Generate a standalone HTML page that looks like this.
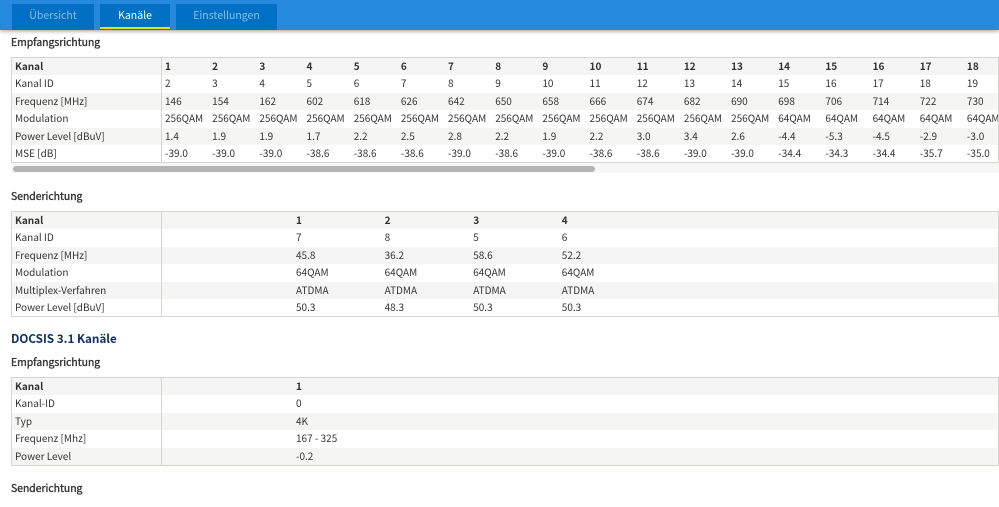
<!DOCTYPE html>
<html lang="de"><head><meta charset="utf-8"><title>Kanäle</title>
<style>
html,body{margin:0;padding:0;background:#fff}
body{width:999px;height:507px;overflow:hidden;position:relative;font-family:"Noto Sans CJK SC","Liberation Sans",sans-serif;font-size:10px;color:#333}
#w{position:absolute;left:0;top:0;width:999px;height:507px;overflow:hidden;filter:blur(.3px)}
.bar{position:absolute;left:0;top:0;width:999px;height:30px;background:#2589de;box-shadow:0 1px 4px rgba(0,0,0,.4)}
.tab{position:absolute;top:4px;height:26px;line-height:24px;background:#0070c4;color:#8dbde6;text-align:center;font-size:10.5px}
.tab.on{color:#fff}
.tab.on:after{content:"";position:absolute;left:0;right:0;bottom:1px;height:2px;background:#dfe31f}
h3,h2{position:absolute;left:11px;margin:0;font-weight:400;font-size:10.4px;line-height:16px;color:#333;white-space:nowrap;-webkit-text-stroke:.35px #333}
h2{font-size:11.7px;color:#0f2f63;font-weight:700;-webkit-text-stroke:0}
.t{position:absolute;left:11px;width:988px;box-sizing:border-box;border:1px solid #d6d6d0;overflow:hidden;background:#fff}
.r{display:flex;height:17.45px;line-height:15.45px;white-space:nowrap}
.r:nth-child(odd){background:#f5f5f4}
.r span{display:block;flex:none;overflow:visible}
.r span:first-child{width:150px;padding-left:3px;box-sizing:border-box;border-right:1px solid #d6d6d0;height:100%}
.a span:not(:first-child){width:47.18px;padding-left:3px;box-sizing:border-box}
.b span:not(:first-child){width:88.6px}
.b span:nth-child(2){margin-left:134px}
.h{font-weight:700}
.sb{position:absolute;left:11px;top:163px;width:988px;height:10px;background:#f6f6f6}
.th{position:absolute;left:2px;top:3px;width:582px;height:6px;border-radius:3px;background:#b4b4b4}
</style></head><body>
<div id="w">
<div class="bar"></div>
<div class="tab" style="left:12px;width:82px">Übersicht</div>
<div class="tab on" style="left:100px;width:70px">Kanäle</div>
<div class="tab" style="left:176px;width:101px">Einstellungen</div>

<h3 style="top:34px">Empfangsrichtung</h3>
<div class="t" style="top:57px;height:106px">
<div class="r a h"><span>Kanal</span><span>1</span><span>2</span><span>3</span><span>4</span><span>5</span><span>6</span><span>7</span><span>8</span><span>9</span><span>10</span><span>11</span><span>12</span><span>13</span><span>14</span><span>15</span><span>16</span><span>17</span><span>18</span></div>
<div class="r a"><span>Kanal ID</span><span>2</span><span>3</span><span>4</span><span>5</span><span>6</span><span>7</span><span>8</span><span>9</span><span>10</span><span>11</span><span>12</span><span>13</span><span>14</span><span>15</span><span>16</span><span>17</span><span>18</span><span>19</span></div>
<div class="r a"><span>Frequenz [MHz]</span><span>146</span><span>154</span><span>162</span><span>602</span><span>618</span><span>626</span><span>642</span><span>650</span><span>658</span><span>666</span><span>674</span><span>682</span><span>690</span><span>698</span><span>706</span><span>714</span><span>722</span><span>730</span></div>
<div class="r a"><span>Modulation</span><span>256QAM</span><span>256QAM</span><span>256QAM</span><span>256QAM</span><span>256QAM</span><span>256QAM</span><span>256QAM</span><span>256QAM</span><span>256QAM</span><span>256QAM</span><span>256QAM</span><span>256QAM</span><span>256QAM</span><span>64QAM</span><span>64QAM</span><span>64QAM</span><span>64QAM</span><span>64QAM</span></div>
<div class="r a"><span>Power Level [dBuV]</span><span>1.4</span><span>1.9</span><span>1.9</span><span>1.7</span><span>2.2</span><span>2.5</span><span>2.8</span><span>2.2</span><span>1.9</span><span>2.2</span><span>3.0</span><span>3.4</span><span>2.6</span><span>-4.4</span><span>-5.3</span><span>-4.5</span><span>-2.9</span><span>-3.0</span></div>
<div class="r a"><span>MSE [dB]</span><span>-39.0</span><span>-39.0</span><span>-39.0</span><span>-38.6</span><span>-38.6</span><span>-38.6</span><span>-39.0</span><span>-38.6</span><span>-39.0</span><span>-38.6</span><span>-38.6</span><span>-39.0</span><span>-39.0</span><span>-34.4</span><span>-34.3</span><span>-34.4</span><span>-35.7</span><span>-35.0</span></div>
</div>
<div class="sb"><div class="th"></div></div>

<h3 style="top:188px">Senderichtung</h3>
<div class="t" style="top:211px;height:106px">
<div class="r b h"><span>Kanal</span><span>1</span><span>2</span><span>3</span><span>4</span></div>
<div class="r b"><span>Kanal ID</span><span>7</span><span>8</span><span>5</span><span>6</span></div>
<div class="r b"><span>Frequenz [MHz]</span><span>45.8</span><span>36.2</span><span>58.6</span><span>52.2</span></div>
<div class="r b"><span>Modulation</span><span>64QAM</span><span>64QAM</span><span>64QAM</span><span>64QAM</span></div>
<div class="r b"><span>Multiplex-Verfahren</span><span>ATDMA</span><span>ATDMA</span><span>ATDMA</span><span>ATDMA</span></div>
<div class="r b"><span>Power Level [dBuV]</span><span>50.3</span><span>48.3</span><span>50.3</span><span>50.3</span></div>
</div>

<h2 style="top:331px">DOCSIS 3.1 Kanäle</h2>
<h3 style="top:354px">Empfangsrichtung</h3>
<div class="t" style="top:377px;height:89px">
<div class="r b h"><span>Kanal</span><span>1</span></div>
<div class="r b"><span>Kanal-ID</span><span>0</span></div>
<div class="r b"><span>Typ</span><span>4K</span></div>
<div class="r b"><span>Frequenz [Mhz]</span><span>167 - 325</span></div>
<div class="r b"><span>Power Level</span><span>-0.2</span></div>
</div>

<h3 style="top:480px">Senderichtung</h3>
</div>
</body></html>
